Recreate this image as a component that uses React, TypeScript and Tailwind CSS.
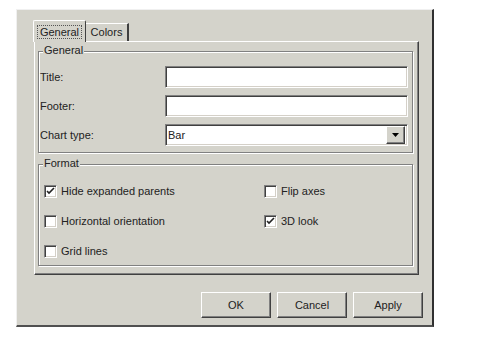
import React from "react";

const raised =
  "border border-t-white border-l-white border-r-[#404040] border-b-[#404040] shadow-[inset_-1px_-1px_0_#808080]";
const sunken =
  "border border-t-[#808080] border-l-[#808080] border-r-white border-b-white shadow-[inset_1px_1px_0_#404040,inset_-1px_-1px_0_#d4d0c8]";

function Check({ checked }: { checked?: boolean }) {
  return (
    <div className={`w-[13px] h-[13px] bg-white ${sunken} flex items-center justify-center`}>
      {checked && (
        <svg width="9" height="9" viewBox="0 0 9 9">
          <path d="M1 4 L3 6 L8 1" stroke="#222" strokeWidth="1.6" fill="none" />
        </svg>
      )}
    </div>
  );
}

function CheckRow({ label, checked }: { label: string; checked?: boolean }) {
  return (
    <div className="flex items-center h-[13px]">
      <Check checked={checked} />
      <span className="ml-[4px] leading-none">{label}</span>
    </div>
  );
}

function GroupBox({ title, children }: { title: string; children: React.ReactNode }) {
  return (
    <div className="relative w-[375px] h-[102px] border border-[#808080] shadow-[inset_1px_1px_0_#fff,1px_1px_0_#fff]">
      <span className="absolute left-[4px] top-[-7px] bg-[#d4d3cb] px-[1px] leading-none">{title}</span>
      {children}
    </div>
  );
}

function Button({ label }: { label: string }) {
  return (
    <div className={`w-[70px] h-[26px] bg-[#d4d3cb] ${raised} flex items-center justify-center`}>
      {label}
    </div>
  );
}

export default function App() {
  return (
    <div
      className="w-[480px] h-[350px] bg-white pt-[9px] pl-[16px] text-[11px] text-[#222]"
      style={{ fontFamily: '"Liberation Sans", Arial, sans-serif' }}
    >
      <div className="w-[418px] h-[318px] bg-[#d4d3cb] border-l border-t border-l-[#f0f0f0] border-t-[#f0f0f0] border-r-2 border-b-2 border-r-[#303030] border-b-[#505050] pl-[16px] pt-[10px]">
        {/* Tabs */}
        <div className="flex items-end h-[21px] relative z-10">
          <div className="w-[53px] h-[21px] bg-[#d4d3cb] border-l border-t border-white border-r border-r-[#404040] rounded-t-[2px] flex items-center justify-center -mb-[1px] h-[22px]">
            <span className="border border-dotted border-[#555] px-[2px] leading-[12px]">General</span>
          </div>
          <div className="w-[43px] h-[18px] border-t border-white border-r-2 border-r-[#404040] flex items-center justify-center">
            Colors
          </div>
        </div>
        {/* Panel */}
        <div className={`w-[385px] h-[234px] ml-[1px] ${raised} pl-[3px] pt-[9px]`}>
          <GroupBox title="General">
            <div className="pt-[14px] flex flex-col gap-[7px]">
              <div className="flex items-center h-[22px]">
                <span className="w-[126px] pl-[1px]">Title:</span>
                <div className={`w-[243px] h-[22px] bg-white ${sunken}`} />
              </div>
              <div className="flex items-center h-[22px]">
                <span className="w-[126px] pl-[1px]">Footer:</span>
                <div className={`w-[243px] h-[22px] bg-white ${sunken}`} />
              </div>
              <div className="flex items-center h-[22px]">
                <span className="w-[126px] pl-[1px]">Chart type:</span>
                <div className={`w-[243px] h-[22px] bg-white ${sunken} flex items-center justify-between pl-[2px] pr-[2px]`}>
                  <span>Bar</span>
                  <div className={`w-[19px] h-[18px] bg-[#d4d3cb] ${raised} flex items-center justify-center`}>
                    <svg width="7" height="4" viewBox="0 0 7 4">
                      <path d="M0 0 H7 L3.5 4 Z" fill="#000" />
                    </svg>
                  </div>
                </div>
              </div>
            </div>
          </GroupBox>
          <div className="h-[11px]" />
          <GroupBox title="Format">
            <div className="flex pt-[20px] pl-[5px]">
              <div className="w-[220px] flex flex-col gap-[17px]">
                <CheckRow label="Hide expanded parents" checked />
                <CheckRow label="Horizontal orientation" />
                <CheckRow label="Grid lines" />
              </div>
              <div className="flex flex-col gap-[17px]">
                <CheckRow label="Flip axes" />
                <CheckRow label="3D look" checked />
              </div>
            </div>
          </GroupBox>
        </div>
        {/* Buttons */}
        <div className="flex justify-end gap-[6px] pr-[9px] pt-[17px]">
          <Button label="OK" />
          <Button label="Cancel" />
          <Button label="Apply" />
        </div>
      </div>
    </div>
  );
}
